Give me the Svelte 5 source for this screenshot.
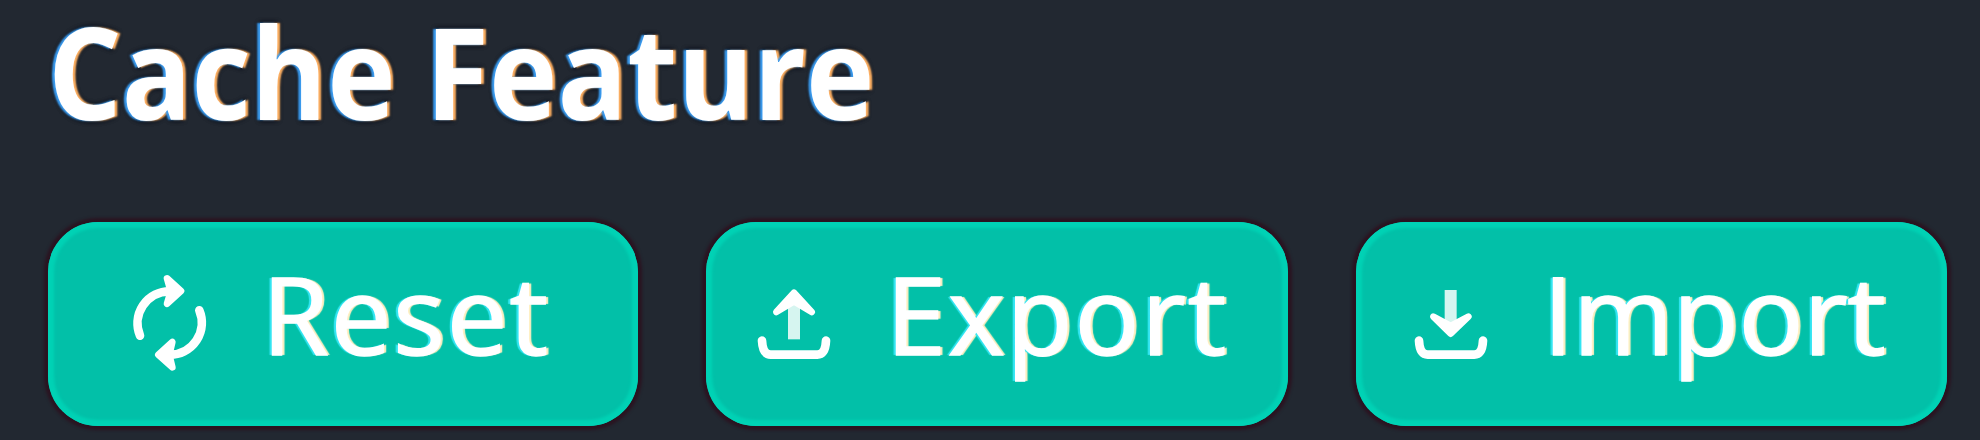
<script>
  const actions = ['Reset', 'Export', 'Import'];
</script>

<main>
  <h1><span>Cache Feature</span></h1>
  <div class="actions">
    {#each actions as label}
      <button class={label.toLowerCase()}>
        {#if label === 'Reset'}
          <svg viewBox="300 190 240 312" aria-hidden="true">
            <path d="M330 381A96 96 0 0 1 418 248H438" />
            <path class="solid" d="M411 209L453 247L411 285L422 248Z" />
            <path d="M508 305A96 96 0 0 1 420 438H402" />
            <path class="solid" d="M427 476L385 438L427 400L418 438Z" />
          </svg>
        {:else if label === 'Export'}
          <svg viewBox="190 190 240 312" aria-hidden="true">
            <path d="M214 396Q216 438 240 438H380Q404 438 406 396" />
            <path class="stem" d="M310 392V270" />
            <path class="solid" d="M257 310L310 252L363 310L310 278Z" />
          </svg>
        {:else}
          <svg viewBox="214 190 240 312" aria-hidden="true">
            <path d="M238 396Q240 438 264 438H404Q428 438 430 396" />
            <path class="stem" d="M333 244V350" />
            <path class="solid" d="M281 324L333 375L386 324L333 352Z" />
          </svg>
        {/if}
        <span>{label}</span>
      </button>
    {/each}
  </div>
</main>

<style>
  :global(body) {
    margin: 0;
    background: #222831;
  }
  main {
    box-sizing: border-box;
    width: 1980px;
    height: 440px;
    padding-left: 48px;
    overflow: hidden;
    background: #222831;
    color: #fff;
    font-family: "Open Sans", "Noto Sans", sans-serif;
  }
  h1 {
    margin: 0;
    height: 143px;
    font-size: 127px;
    line-height: 141px;
    font-weight: 700;
    white-space: nowrap;
    text-shadow: -3px 0 2px #3b9cf0, 3px 0 2px #ffb163, 0 0 6px #050b18, 0 0 6px #050b18;
  }
  h1 span {
    display: inline-block;
    transform: scaleX(0.911);
    transform-origin: left;
  }
  .actions {
    display: flex;
    gap: 68px;
    margin-top: 79px;
  }
  button {
    box-sizing: border-box;
    display: flex;
    align-items: center;
    flex: none;
    height: 204px;
    margin: 0;
    border: 0;
    border-radius: 50px;
    background: #02c0a8;
    color: #fff;
    font: 500 108px/1 "Open Sans", "Noto Sans", sans-serif;
    box-shadow: inset 0 0 3px 6px #00d2b5, 0 0 3px 4px #2a1421;
  }
  .reset { width: 590px; padding: 0 0 0 82px; }
  .export { width: 582px; padding: 0 0 0 48px; }
  .import { width: 591px; padding: 0 0 0 55px; }
  button span {
    padding-bottom: 21px;
    margin-left: 52px;
    letter-spacing: 2px;
    white-space: nowrap;
    -webkit-text-stroke: 1.5px #fff;
    text-shadow: -3px 0 1px #35e6f4, 3px 0 1px #fff0c4;
  }
  .import span { letter-spacing: -0.2px; }
  svg {
    flex: none;
    width: 80px;
    height: 104px;
    fill: none;
    stroke: #fff;
    stroke-width: 26;
    stroke-linecap: round;
    stroke-linejoin: round;
  }
  .stem {
    stroke: #d6f5f0;
    stroke-width: 36;
    stroke-linecap: butt;
  }
  .solid {
    fill: #fff;
    stroke-width: 20;
  }
</style>
